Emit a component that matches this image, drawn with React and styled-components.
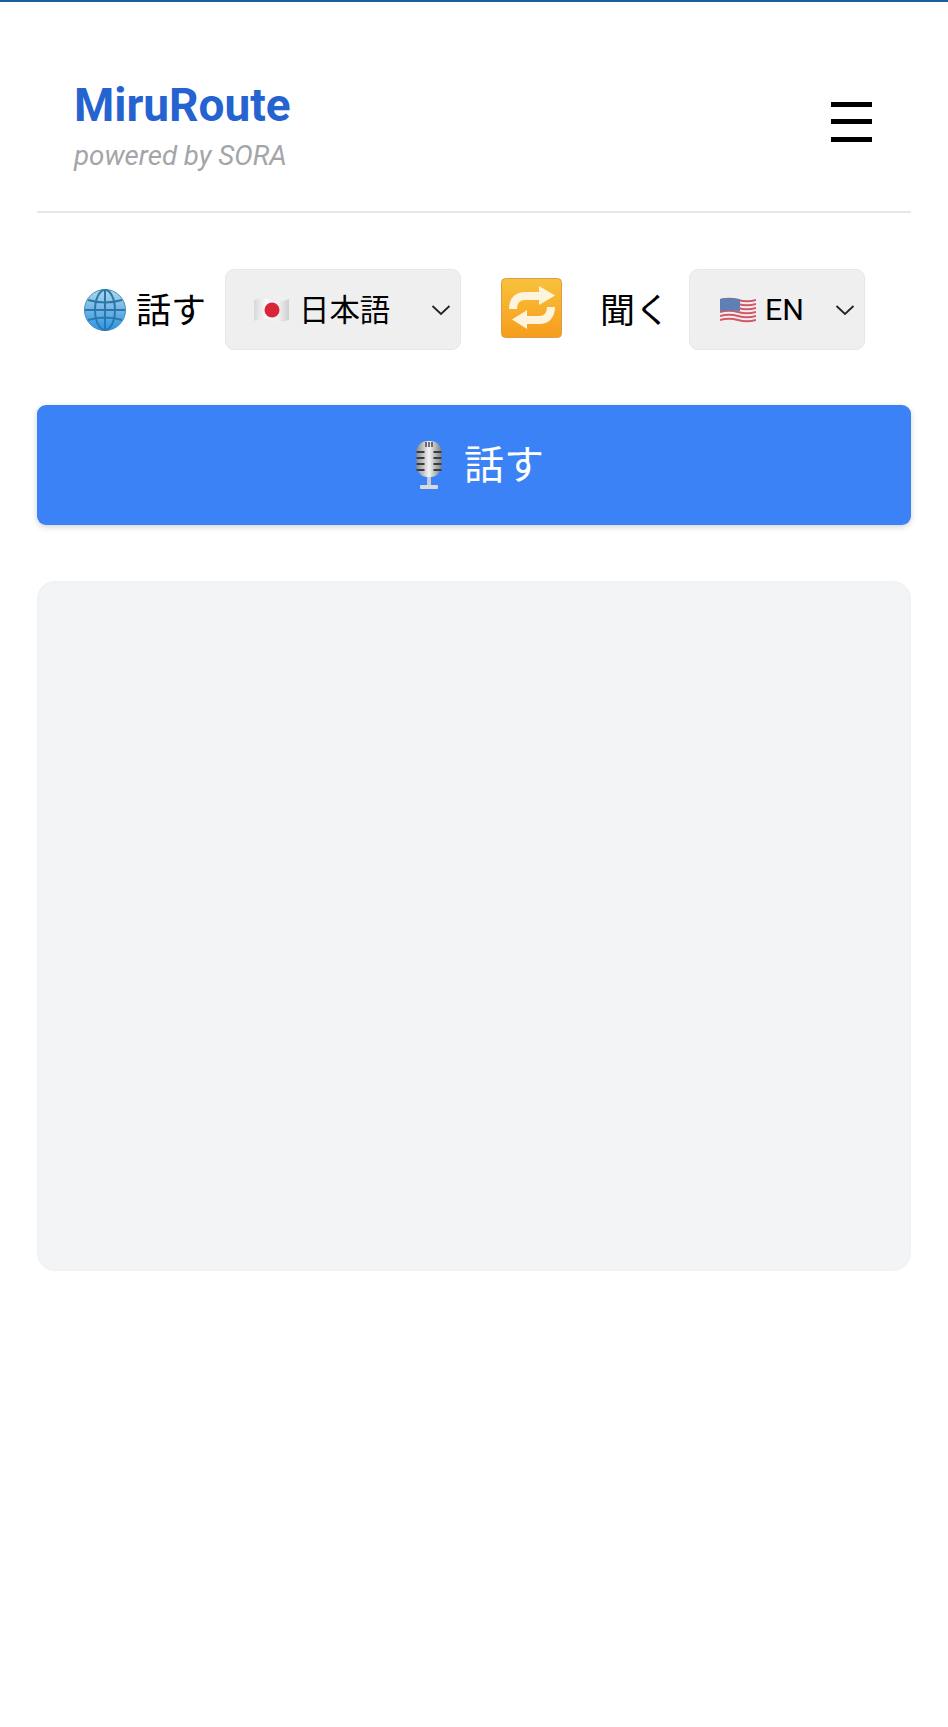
import React from "react";
import styled, { createGlobalStyle } from "styled-components";

const GlobalStyle = createGlobalStyle`
    html, body {
        margin: 0;
        padding: 0;
        background: #ffffff;
    }
    body {
        font-family: Roboto, "Noto Sans CJK JP", sans-serif;
    }
`;

const Page = styled.div`
    width: 948px;
    height: 1727px;
    box-sizing: border-box;
    border-top: 2px solid #1f5c99;
    padding: 0 37px;
`;

const Header = styled.header`
    display: flex;
    justify-content: space-between;
    align-items: center;
    height: 211px;
    padding: 38px 39px 0 37px;
    box-sizing: border-box;
    border-bottom: 2px solid #e5e7eb;
`;

const Brand = styled.div`
    display: flex;
    flex-direction: column;
    gap: 9px;
`;

const Title = styled.h1`
    margin: 0;
    font-size: 46px;
    line-height: 52px;
    font-weight: 700;
    color: #2563d0;
`;

const Subtitle = styled.p`
    margin: 0;
    font-size: 27.7px;
    line-height: 32px;
    font-style: italic;
    color: #a3a5a9;
`;

const MenuButton = styled.div`
    display: flex;
    flex-direction: column;
    gap: 12.5px;
    width: 41px;
    margin-bottom: 8px;
`;

const MenuLine = styled.span`
    height: 5px;
    background: #000;
`;

const LanguageRow = styled.div`
    display: flex;
    align-items: center;
    height: 81px;
    margin-top: 56px;
    padding-left: 47px;
`;

const RowLabel = styled.span`
    display: flex;
    align-items: center;
    gap: ${(p) => p.$gap || 0}px;
    font-size: 35px;
    color: #000;
    margin-left: ${(p) => p.$left || 0}px;
`;

const LabelText = styled.span`
    padding-bottom: 4px;
`;

const Select = styled.div`
    display: flex;
    align-items: center;
    box-sizing: border-box;
    width: ${(p) => p.$width}px;
    height: 81px;
    margin-left: ${(p) => p.$left}px;
    padding: 0 9px 0 ${(p) => p.$pad}px;
    background: #efefef;
    border: 1px solid #e5e7eb;
    border-radius: 9px;
    font-size: 30.4px;
    color: #000;
`;

const SelectText = styled.span`
    margin-left: ${(p) => p.$gap}px;
    flex: 1;
    padding-bottom: ${(p) => p.$lift || 0}px;
`;

const SwapIcon = styled.svg`
    width: 61px;
    height: 60px;
    margin: 0 0 4px 40px;
    flex: none;
`;

const SpeakButton = styled.button`
    display: flex;
    align-items: center;
    justify-content: center;
    gap: 22px;
    width: 100%;
    height: 120px;
    margin-top: 55px;
    padding: 0 0 0 12px;
    border: none;
    border-radius: 9px;
    background: #3b82f6;
    color: #fff;
    font-family: inherit;
    font-size: 40px;
    box-shadow: 0 2px 6px rgba(0, 0, 0, 0.18);
`;

const ButtonText = styled.span`
    padding-bottom: 6px;
`;

const OutputPanel = styled.section`
    height: 690px;
    margin-top: 56px;
    background: #f3f4f6;
    border-radius: 18px;
    box-shadow: inset 0 0 4px rgba(0, 0, 0, 0.03);
`;

function GlobeIcon() {
    return (
        <svg width="42" height="42" viewBox="0 0 42 42">
            <defs>
                <linearGradient id="globe" x1="0" y1="0" x2="0" y2="1">
                    <stop offset="0" stopColor="#b4d6e8" />
                    <stop offset="1" stopColor="#2b93e6" />
                </linearGradient>
            </defs>
            <circle cx="21" cy="21" r="20.5" fill="url(#globe)" stroke="#3f8fc0" />
            <g fill="none" stroke="#2a78a8" strokeWidth="2">
                <ellipse cx="21" cy="21" rx="10" ry="20" />
                <path d="M21 1v40M1 21h40M4 11q17 5 34 0M4 31q17-5 34 0" />
            </g>
        </svg>
    );
}

function JapanFlag() {
    return (
        <svg width="35" height="26" viewBox="0 0 35 26">
            <defs>
                <linearGradient id="jp" x1="0" y1="0" x2="1" y2="0">
                    <stop offset="0" stopColor="#d8d8d8" />
                    <stop offset="0.35" stopColor="#fbfbfb" />
                    <stop offset="0.7" stopColor="#f0f0f0" />
                    <stop offset="1" stopColor="#cfcfcf" />
                </linearGradient>
            </defs>
            <path d="M0 3q8-3 17 0t18-1v21q-9 3-18 0t-17 1z" fill="url(#jp)" />
            <circle cx="18" cy="13" r="7.500" fill="#d9273a" />
        </svg>
    );
}

function UsFlag() {
    const stripes = [2, 6, 10, 14, 18, 22];
    return (
        <svg width="36" height="26" viewBox="0 0 36 26">
            <path d="M0 2q9-3 18 0t18-1v23q-9 3-18 0t-18 1z" fill="#f7eef0" />
            {stripes.map((y) => (
                <path
                    key={y}
                    d={`M0 ${y + 1}q9-2.500 18 0t18 0`}
                    fill="none"
                    stroke="#cf5a68"
                    strokeWidth="2"
                />
            ))}
            <path d="M0 2q5-1.500 10-1t10 1v12q-10-1-20 0z" fill="#5f7fb5" />
        </svg>
    );
}

function Chevron() {
    return (
        <svg width="20" height="12" viewBox="0 0 20 12" fill="none" stroke="#222" strokeWidth="1.800">
            <path d="M1.500 2l8.500 8 8.500-8" />
        </svg>
    );
}

function Swap() {
    return (
        <SwapIcon viewBox="0 0 61 60">
            <defs>
                <linearGradient id="swap" x1="0" y1="0" x2="0" y2="1">
                    <stop offset="0" stopColor="#f8c23c" />
                    <stop offset="1" stopColor="#f79c1c" />
                </linearGradient>
            </defs>
            <rect x="0.5" y="0.5" width="60" height="59" rx="4" fill="url(#swap)" stroke="#dc9c48" />
            <g fill="none" stroke="#fdf4dd" strokeWidth="8">
                <path d="M12 31c0-9 5-13 12-13h16" />
                <path d="M50 29c0 9-5 13-12 13H24" />
            </g>
            <g fill="#fdf4dd">
                <path d="M38 8l16 9.500-16 9.500z" />
                <path d="M26 32l-15 9.500 15 9.500z" />
            </g>
        </SwapIcon>
    );
}

function MicIcon() {
    const ticks = [11, 17, 23, 29];
    return (
        <svg width="26" height="48" viewBox="0 0 26 48">
            <defs>
                <linearGradient id="mic" x1="0" y1="0" x2="1" y2="0">
                    <stop offset="0" stopColor="#8a8b90" />
                    <stop offset="0.5" stopColor="#f4f4f4" />
                    <stop offset="1" stopColor="#7d7e83" />
                </linearGradient>
            </defs>
            <rect x="0.5" y="0" width="25" height="36" rx="11" fill="url(#mic)" />
            {ticks.map((y) => (
                <path key={y} d={`M0.500 ${y}h8M17.500 ${y}h8`} stroke="#3a3c42" strokeWidth="2" />
            ))}
            <path d="M10 1v5M13 1v5M16 1v5" stroke="#45474c" strokeWidth="1.500" />
            <rect x="11" y="36" width="4" height="8" fill="#c9cbd0" />
            <rect x="4" y="44" width="18" height="4" rx="1" fill="#d8dadf" />
        </svg>
    );
}

export default function App() {
    return (
        <>
            <GlobalStyle />
            <Page>
                <Header>
                    <Brand>
                        <Title>MiruRoute</Title>
                        <Subtitle>powered by SORA</Subtitle>
                    </Brand>
                    <MenuButton>
                        <MenuLine />
                        <MenuLine />
                        <MenuLine />
                    </MenuButton>
                </Header>
                <LanguageRow>
                    <RowLabel $gap={10}>
                        <GlobeIcon />
                        <LabelText>話す</LabelText>
                    </RowLabel>
                    <Select $width={236} $left={19} $pad={28}>
                        <JapanFlag />
                        <SelectText $gap={10} $lift={4}>日本語</SelectText>
                        <Chevron />
                    </Select>
                    <Swap />
                    <RowLabel $left={38}>
                        <LabelText>聞く</LabelText>
                    </RowLabel>
                    <Select $width={176} $left={19} $pad={30}>
                        <UsFlag />
                        <SelectText $gap={9}>EN</SelectText>
                        <Chevron />
                    </Select>
                </LanguageRow>
                <SpeakButton>
                    <MicIcon />
                    <ButtonText>話す</ButtonText>
                </SpeakButton>
                <OutputPanel />
            </Page>
        </>
    );
}
